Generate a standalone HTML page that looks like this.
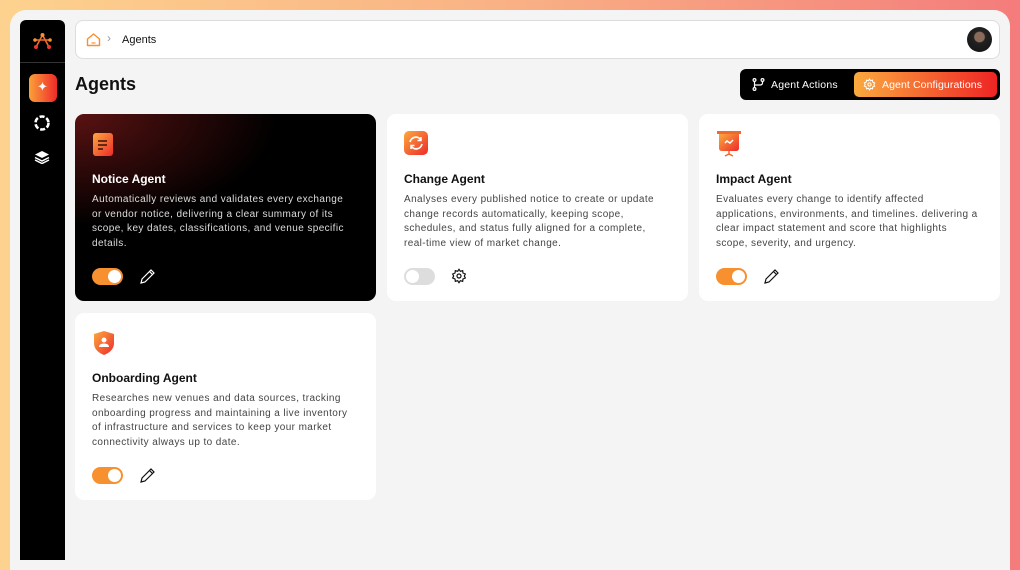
<!DOCTYPE html>
<html><head><style>
*{box-sizing:border-box;margin:0;padding:0}
body{width:1020px;height:560px;overflow:hidden;font-family:"Liberation Sans",sans-serif;background:linear-gradient(90deg,#fdd28e 0%,#f9b184 50%,#f47c7c 100%);position:relative}
.inner{position:absolute;left:10px;top:10px;width:1000px;height:560px;background:#f4f4f4;border-radius:16px 16px 0 0}
.side{position:absolute;left:20px;top:20px;width:45px;height:540px;background:#000;border-radius:6px 6px 0 0}
.side .sep{position:absolute;top:42px;left:0;right:0;height:1px;background:#333}
.top{position:absolute;left:75px;top:20px;width:925px;height:39px;background:#fff;border:1px solid #ddd;border-radius:8px}
.crumb{position:absolute;left:46px;top:13px;font-size:11px;color:#111}
h1{position:absolute;left:75px;top:74px;font-size:18px;font-weight:bold;color:#111}
.tabs{position:absolute;left:740px;top:69px;width:260px;height:31px;background:#000;border-radius:6px}
.tab1{position:absolute;left:31px;top:10px;color:#fff;font-size:10.5px;letter-spacing:.2px}
.tab2{position:absolute;left:114px;top:3px;width:143px;height:25px;border-radius:5px;background:linear-gradient(90deg,#fbaa3e,#ee2424);color:#fff;font-size:10.5px;padding:7px 0 0 28px;letter-spacing:.1px}
.card{position:absolute;width:301px;height:187px;background:#fff;border-radius:9px;padding:0 17px}
.card.dark{background:radial-gradient(ellipse 90% 80% at 0% 0%,#5a1212 0%,#2a0808 40%,#000 75%)}
.card .t{position:absolute;left:17px;top:58px;font-size:12px;font-weight:bold;color:#111}
.card .d{position:absolute;left:17px;top:79px;white-space:nowrap;font-size:10px;letter-spacing:.4px;line-height:14.7px;color:#444}
.dark .t{color:#fff}.dark .d{color:#ddd}
.ic{position:absolute;left:17px;top:17px}
.tg{position:absolute;left:17px;top:154px;width:31px;height:17px;border-radius:9px;background:#f7902f}
.tg::after{content:"";position:absolute;right:2px;top:2px;width:13px;height:13px;border-radius:50%;background:#fff}
.tg.off{background:#ddd}.tg.off::after{left:2px;right:auto}
.act{position:absolute;left:64px;top:154px}
</style></head><body>
<div class="inner"></div>
<div class="side">
<div class="sep"></div>
<svg style="position:absolute;left:12px;top:12px" width="21" height="18" viewBox="0 0 21 18"><g stroke="#f26a2a" stroke-width="1.6" fill="none"><path d="M10.5 3L4 15M10.5 3L17 15M3 8L18 8"/></g><circle cx="10.5" cy="3" r="2" fill="#f7902f"/><circle cx="3" cy="8" r="1.8" fill="#f7902f"/><circle cx="18" cy="8" r="1.8" fill="#f7902f"/><circle cx="4" cy="15" r="2" fill="#ee3a2a"/><circle cx="17" cy="15" r="2" fill="#ee3a2a"/></svg>
<div style="position:absolute;left:9px;top:54px;width:28px;height:28px;border-radius:6px;background:linear-gradient(90deg,#fba03a,#ee2a2a)"><span style="position:absolute;left:8px;top:5px;color:#fff;font-size:13px">✦</span></div>
<svg style="position:absolute;left:14px;top:95px" width="16" height="16" viewBox="0 0 16 16"><circle cx="8" cy="8" r="6.5" fill="none" stroke="#fff" stroke-width="2.5" stroke-dasharray="5 2"/><circle cx="8" cy="8" r="2.5" fill="#000"/></svg>
<svg style="position:absolute;left:14px;top:130px" width="16" height="14" viewBox="0 0 16 14"><path d="M8 1L15 4.5L8 8L1 4.5Z" fill="#fff"/><path d="M1 7.5L8 11L15 7.5M1 10L8 13.5L15 10" stroke="#fff" stroke-width="1.5" fill="none"/></svg>
</div>
<div class="top">
<svg style="position:absolute;left:10px;top:12px" width="15" height="14" viewBox="0 0 15 14"><path d="M1.5 6L7.5 1L13.5 6V12.5H1.5Z" fill="none" stroke="#f7902f" stroke-width="1.4" stroke-linejoin="round"/><path d="M5.5 10H9.5" stroke="#f7902f" stroke-width="1.2"/></svg>
<span style="position:absolute;left:31px;top:10px;color:#999;font-size:12px">›</span>
<span class="crumb">Agents</span>
<div style="position:absolute;right:7px;top:6px;width:25px;height:25px;border-radius:50%;background:radial-gradient(circle at 50% 40%,#8a6a5a 0 25%,#222 30%,#111)"></div>
</div>
<h1>Agents</h1>
<div class="tabs">
<svg style="position:absolute;left:12px;top:9px" width="13" height="13" viewBox="0 0 13 13" fill="none" stroke="#fff" stroke-width="1.2"><circle cx="2.5" cy="2" r="1.4"/><circle cx="10.5" cy="2" r="1.4"/><circle cx="2.5" cy="11" r="1.4"/><path d="M2.5 3.5V9.5M10.5 3.5V5Q10.5 7 8 7H2.5"/></svg>
<span class="tab1">Agent Actions</span>
<div class="tab2"><svg style="position:absolute;left:9px;top:6px" width="13" height="13" viewBox="0 0 24 24" fill="none" stroke="#fff" stroke-width="2"><circle cx="12" cy="12" r="3"/><path d="M12 2l2 3 3.5-1 .5 3.5 3.5 1.5-1.5 3 1.5 3-3.5 1.5-.5 3.5-3.5-1-2 3-2-3-3.5 1-.5-3.5L2.5 15 4 12 2.5 9 6 7.5 6.5 4 10 5z"/></svg>Agent Configurations</div>
</div>

<div class="card dark" style="left:75px;top:114px">
<svg class="ic" width="22" height="26" viewBox="0 0 22 26"><defs><linearGradient id="g" x1="0" y1="0" x2="1" y2="1"><stop offset="0" stop-color="#fbaa3e"/><stop offset="1" stop-color="#ee2a2a"/></linearGradient></defs><rect x="1" y="2" width="20" height="23" rx="3" fill="url(#g)"/><path d="M6 10H15M6 14H15M6 18H11" stroke="#3a1008" stroke-width="1.5"/></svg>
<div class="t">Notice Agent</div>
<div class="d">Automatically reviews and validates every exchange<br>or vendor notice, delivering a clear summary of its<br>scope, key dates, classifications, and venue specific<br>details.</div>
<div class="tg"></div>
<svg class="act" width="17" height="17" viewBox="0 0 17 17" fill="none" stroke="#fff" stroke-width="1.2"><path d="M2 15L3 11L12 2L15 5L6 14Z M10.5 3.5L13.5 6.5"/></svg>
</div>

<div class="card" style="left:387px;top:114px">
<svg class="ic" width="24" height="24" viewBox="0 0 24 24"><rect width="24" height="24" rx="5" fill="url(#g)"/><path d="M6 11A6 6 0 0 1 17 9M18 13A6 6 0 0 1 7 15" stroke="#fff" stroke-width="1.7" fill="none"/><path d="M17 6V9.5H13.5M7 18V14.5H10.5" stroke="#fff" stroke-width="1.5" fill="none"/></svg>
<div class="t">Change Agent</div>
<div class="d">Analyses every published notice to create or update<br>change records automatically, keeping scope,<br>schedules, and status fully aligned for a complete,<br>real-time view of market change.</div>
<div class="tg off"></div>
<svg class="act" width="16" height="16" viewBox="0 0 24 24" fill="none" stroke="#111" stroke-width="1.8"><circle cx="12" cy="12" r="3"/><path d="M12 2l2 3 3.5-1 .5 3.5 3.5 1.5-1.5 3 1.5 3-3.5 1.5-.5 3.5-3.5-1-2 3-2-3-3.5 1-.5-3.5L2.5 15 4 12 2.5 9 6 7.5 6.5 4 10 5z"/></svg>
</div>

<div class="card" style="left:699px;top:114px">
<svg class="ic" width="26" height="26" viewBox="0 0 26 26"><rect x="1" y="0" width="24" height="3" fill="#f26a2a"/><path d="M3 3H23V17Q23 20 20 20H6Q3 20 3 17Z" fill="url(#g)"/><path d="M9 12L11 10L14 12L17 9" stroke="#fff" stroke-width="1.5" fill="none"/><path d="M13 20V24M9 25L13 23L17 25" stroke="#f26a2a" stroke-width="1.5" fill="none"/></svg>
<div class="t">Impact Agent</div>
<div class="d">Evaluates every change to identify affected<br>applications, environments, and timelines. delivering a<br>clear impact statement and score that highlights<br>scope, severity, and urgency.</div>
<div class="tg"></div>
<svg class="act" width="17" height="17" viewBox="0 0 17 17" fill="none" stroke="#111" stroke-width="1.2"><path d="M2 15L3 11L12 2L15 5L6 14Z M10.5 3.5L13.5 6.5"/></svg>
</div>

<div class="card" style="left:75px;top:313px">
<svg class="ic" width="24" height="26" viewBox="0 0 24 26"><path d="M12 1L22 4V13Q22 21 12 25Q2 21 2 13V4Z" fill="url(#g)"/><circle cx="12" cy="10" r="2.5" fill="#fff"/><path d="M7 17Q7 13.5 12 13.5Q17 13.5 17 17Z" fill="#fff"/></svg>
<div class="t">Onboarding Agent</div>
<div class="d">Researches new venues and data sources, tracking<br>onboarding progress and maintaining a live inventory<br>of infrastructure and services to keep your market<br>connectivity always up to date.</div>
<div class="tg"></div>
<svg class="act" width="17" height="17" viewBox="0 0 17 17" fill="none" stroke="#111" stroke-width="1.2"><path d="M2 15L3 11L12 2L15 5L6 14Z M10.5 3.5L13.5 6.5"/></svg>
</div>
</body></html>
